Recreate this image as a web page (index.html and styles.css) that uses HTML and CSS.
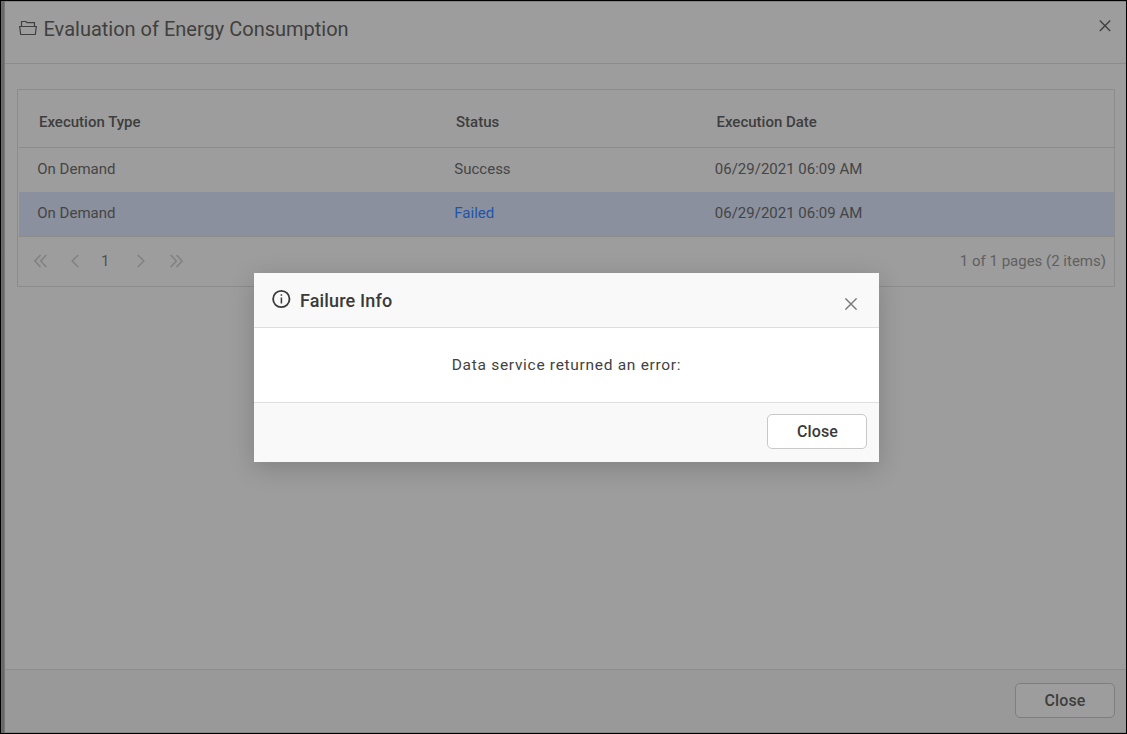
FILE: index.html
```html
<!DOCTYPE html>
<html lang="en">
<head>
<meta charset="utf-8">
<title>Evaluation of Energy Consumption</title>
<link rel="stylesheet" href="styles.css">
</head>
<body>
<div class="screen">
  <div class="strip"></div>
  <main class="panel">
    <header class="panel-header">
      <svg class="folder" width="18" height="16" viewBox="0 0 18 16" fill="none" stroke="currentColor" stroke-width="1.200"><path d="M2.500 6.500V1.500h4.500l1 1.200h7.500V6.500M.7 6.500h16.600l-1 8H1.700z"/></svg>
      <h1 class="panel-title">Evaluation of Energy Consumption</h1>
      <svg class="panel-x" width="12" height="12" viewBox="0 0 12 12" fill="none" stroke="currentColor" stroke-width="1.4"><path d="M.8.6l10.400 10.400M11.200.6L.8 11"/></svg>
    </header>
    <section class="content">
      <div class="grid">
        <div class="row head"><span>Execution Type</span><span>Status</span><span>Execution Date</span></div>
        <div class="row"><span>On Demand</span><span>Success</span><span>06/29/2021 06:09 AM</span></div>
        <div class="row selected"><span>On Demand</span><span class="failed">Failed</span><span>06/29/2021 06:09 AM</span></div>
        <div class="pager">
          <svg class="first" width="13" height="14" viewBox="0 0 13 14"><path d="M6.500 1l-5.600 6 5.600 6M12.300 1L6.700 7l5.600 6"/></svg>
          <svg class="prev" width="8" height="14" viewBox="0 0 8 14"><path d="M7.200 1L1.200 7l6 6"/></svg>
          <span class="page">1</span>
          <svg class="next" width="8" height="14" viewBox="0 0 8 14"><path d="M.8 1l6 6-6 6"/></svg>
          <svg class="last" width="13" height="14" viewBox="0 0 13 14"><path d="M.7 1l5.600 6L.7 13M6.500 1l5.600 6-5.600 6"/></svg>
          <span class="summary">1 of 1 pages (2 items)</span>
        </div>
      </div>
    </section>
    <footer class="panel-footer"><button class="btn dim"><span>Close</span></button></footer>
  </main>
  <div class="modal" role="dialog">
    <header class="modal-header">
      <svg class="info" width="20" height="20" viewBox="0 0 20 20" fill="none" stroke="currentColor"><circle cx="10.300" cy="10" r="8.200" stroke-width="1.800"/><path d="M10.400 8.500v6M10.400 5.200v1.600" stroke-width="1.500"/></svg>
      <h2 class="modal-title">Failure Info</h2>
      <svg class="modal-x" width="12" height="12" viewBox="0 0 12 12" fill="none" stroke="currentColor" stroke-width="1.400"><path d="M.4.400l11.200 11.200M11.600.400L.4 11.600"/></svg>
    </header>
    <div class="modal-body"><span>Data service returned an error:</span></div>
    <footer class="modal-footer"><button class="btn"><span>Close</span></button></footer>
  </div>
</div>
</body>
</html>
```
FILE: styles.css
```css
* { box-sizing: border-box; }
body { margin: 0; font-family: Roboto, "Liberation Sans", sans-serif; }
.screen { position: relative; display: flex; width: 1127px; height: 734px; border: 1px solid #000; background: #9d9d9d; overflow: hidden; }
.strip { width: 4px; background: linear-gradient(90deg, #6f6c6c, #686666 70%, #858585); }
.panel { flex: 1; display: flex; flex-direction: column; border-top: 1px solid #858585; border-bottom: 1px solid #858585; }
.panel-header { display: flex; align-items: flex-start; height: 62px; border-bottom: 1px solid #8c8c8c; padding: 0 15.5px 0 13.5px; color: #404040; }
.folder { margin-top: 17.5px; }
.panel-title { margin: 14px 0 0 7px; font-size: 20px; line-height: 26px; font-weight: 400; flex: 1; }
.panel-x { margin-top: 18px; }
.content { flex: 1; padding: 25px 11px 0 12px; }
.grid { height: 198px; border: 1px solid #8c8c8c; color: #454545; font-size: 15px; }
.row { display: grid; grid-template-columns: 417px 260.5px 1fr; height: 44px; line-height: 42px; margin-left: 1px; padding-left: 18.300px; }
.head { height: 58px; border-bottom: 1px solid #8c8c8c; line-height: 64px; padding-left: 20px; font-weight: 500; color: #3e3e3e; }
.selected { background: #8a909d; }
.failed { color: #2054ac; }
.pager { display: flex; align-items: center; height: 51px; border-top: 1px solid #8b8b8b; margin-left: 1px; padding: 0 8px 2px 15px; color: #606060; }
.pager svg { fill: none; stroke: #828282; stroke-width: 1.600; }
.prev { margin-left: 24px; }
.page { margin-left: 22px; width: 9px; color: #505050; }
.next { margin-left: 27px; }
.last { margin-left: 25px; }
.summary { margin-left: auto; }
.panel-footer { display: flex; justify-content: flex-end; height: 63px; border-top: 1px solid #8c8c8c; background: #999; padding: 13px 11px 0; }
.btn { width: 100px; height: 35px; border: 1px solid #c8c8c8; border-radius: 5px; background: #fff; color: #3a3a3a; font: 500 16px Roboto, sans-serif; letter-spacing: .1px; padding: 0 0 0 1px; }
.dim { border-color: #7e7e7e; background: #9d9d9d; color: #3e3e3e; padding: 0; }
.modal { position: absolute; left: 253px; top: 272px; width: 625px; height: 189px; background: #fff; color: #3a3a3a; box-shadow: 0 6px 24px rgba(0,0,0,.18); }
.modal-header { display: flex; align-items: flex-start; height: 55px; background: #f9f9f9; border-bottom: 1px solid #dedede; padding: 0 22px 0 17px; }
.info { margin-top: 16px; }
.modal-title { flex: 1; margin: 15px 0 0 9px; font-size: 18px; line-height: 26px; font-weight: 500; letter-spacing: .15px; }
.modal-x { margin-top: 25px; color: #777; }
.modal-body { height: 74px; display: flex; align-items: center; justify-content: center; font-size: 15.500px; letter-spacing: .7px; padding-bottom: 1px; color: #424242; }
.modal-footer { display: flex; justify-content: flex-end; height: 60px; background: #f9f9f9; border-top: 1px solid #dedede; padding: 11px 12px 0; }
```
